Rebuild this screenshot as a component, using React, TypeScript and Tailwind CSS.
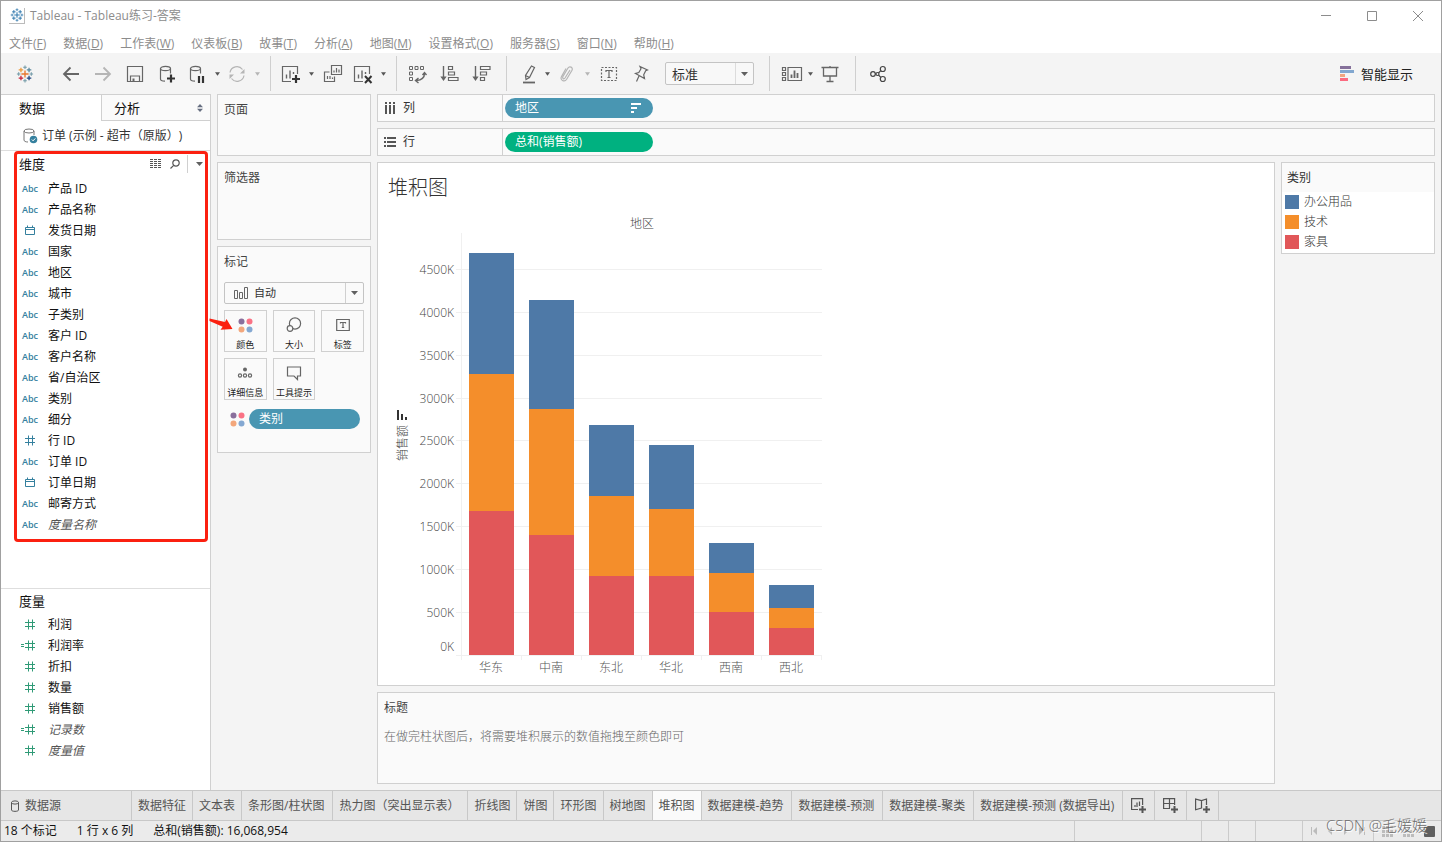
import React from "react";

const LOGO_SMALL = "M12 2.5v4M10 4.5h4M12 17.5v4M10 19.5h4M3 12h4M5 10v4M17 12h4M19 10v4";

function TableauLogo({ mono = false, className = "" }: { mono?: boolean; className?: string }) {
  const c = mono
    ? ["#2f78ad", "#2f78ad", "#2f78ad", "#2f78ad", "#2f78ad", "#2f78ad"]
    : ["#e8762c", "#eb9a3c", "#59879b", "#c72037", "#1f447e", "#7099a6"];
  return (
    <svg viewBox="2 2 20 20" className={className} fill="none" aria-hidden="true">
      <path d={LOGO_SMALL} stroke={c[5]} strokeWidth="1.1" />
      <path d="M12 8v8M8 12h8" stroke={c[0]} strokeWidth="1.5" />
      <path d="M7.5 5v5M5 7.5h5" stroke={c[1]} strokeWidth="1.4" />
      <path d="M16.5 5v5M14 7.5h5" stroke={c[2]} strokeWidth="1.4" />
      <path d="M7.5 14v5M5 16.5h5" stroke={c[3]} strokeWidth="1.4" />
      <path d="M16.5 14v5M14 16.5h5" stroke={c[4]} strokeWidth="1.4" />
    </svg>
  );
}

function Glyph({ children, className = "h-5 w-5", box = "0 0 20 20" }: { children: React.ReactNode; className?: string; box?: string }) {
  return (
    <svg viewBox={box} className={className} fill="none" stroke="currentColor" strokeWidth="1.2" aria-hidden="true">
      {children}
    </svg>
  );
}

function Caret() {
  return (
    <svg viewBox="0 0 7 4" className="h-1 w-[7px] text-[#606060]" aria-hidden="true">
      <path d="M0 0h7L3.500 4z" fill="currentColor" />
    </svg>
  );
}

function Tool({ label, size = "w-8", children }: { label: string; size?: string; children: React.ReactNode }) {
  return (
    <button type="button" aria-label={label} className={`flex h-8 shrink-0 items-center justify-center ${size}`}>
      {children}
    </button>
  );
}

function Drop({ label, muted = false, size = "w-3" }: { label: string; muted?: boolean; size?: string }) {
  return (
    <button type="button" aria-label={label} className={`flex h-8 shrink-0 items-center justify-center ${size}`}>
      <svg viewBox="0 0 6 4" className={muted ? "h-1 w-[5px] text-[#b5b5b5]" : "h-1 w-[5px] text-[#555]"} aria-hidden="true">
        <path d="M0 0h6L3 4z" fill="currentColor" />
      </svg>
    </button>
  );
}

const plus = <path d="M14 10.5v8M10 14.5h8" stroke="#333" strokeWidth="2.2" />;
const cylinder = (
  <>
    <ellipse cx="8.5" cy="4.5" rx="5" ry="2.2" />
    <path d="M3.500 4.500v10.500c0 1.300 1.800 2.200 4.500 2.200M13.500 4.500v5" />
  </>
);

const menus: [string, string][] = [
  ["文件", "F"], ["数据", "D"], ["工作表", "W"], ["仪表板", "B"], ["故事", "T"], ["分析", "A"],
  ["地图", "M"], ["设置格式", "O"], ["服务器", "S"], ["窗口", "N"], ["帮助", "H"],
];

function Toolbar() {
  const group = "flex h-[35px] items-center border-r border-[#cfcfcf]";
  return (
    <div role="toolbar" aria-label="工具栏" className="flex h-[41px] items-center bg-[#f4f4f4] text-[#666]">
      <div className={`${group} w-12 justify-center`}>
        <Tool label="开始页面"><TableauLogo className="h-[18px] w-[18px]" /></Tool>
      </div>
      <div className={`${group} pr-[7px] pl-1.5`}>
        <Tool label="撤消"><Glyph><path d="M18 10H3M9.500 3.500 3 10l6.500 6.500" strokeWidth="1.8" /></Glyph></Tool>
        <Tool label="重做"><span className="text-[#b5b5b5]"><Glyph><path d="M2 10h15M10.500 3.500 17 10l-6.500 6.500" strokeWidth="1.8" /></Glyph></span></Tool>
        <Tool label="保存"><Glyph><path d="M2.500 2.500h15v15h-15zM5.500 17.500v-5.500h9v5.500" /><path d="M7.500 14.500h2v3h-2z" fill="currentColor" stroke="none" /></Glyph></Tool>
        <Tool label="新建数据源"><Glyph>{cylinder}{plus}</Glyph></Tool>
        <Tool label="暂停自动更新" size="w-7"><Glyph>{cylinder}<path d="M12 12v7M16 12v7" stroke="#333" strokeWidth="2.200" /></Glyph></Tool>
        <Drop label="自动更新选项" />
        <Tool label="运行更新" size="w-7"><span className="text-[#b5b5b5]"><Glyph><path d="M3 8.500a7 7 0 0 1 12.500-3M17 11.500a7 7 0 0 1-12.500 3" /><path d="M17.500 5v4.500h-4.500zM2.500 15v-4.500h4.500z" fill="currentColor" stroke="none" /></Glyph></span></Tool>
        <Drop label="更新选项" muted />
      </div>
      <div className={`${group} pr-[7px] pl-1.5`}>
        <Tool label="新建工作表" size="w-7"><Glyph><path d="M10 17.500H1.500v-15h15V10" /><path d="M5.500 14.500v-4M9 14.500v-8M12.500 10V8" strokeWidth="1.400" /><path d="M15 11v8M11 15h8" stroke="#333" strokeWidth="2.200" /></Glyph></Tool>
        <Drop label="新建选项" />
        <Tool label="复制工作表"><Glyph><path d="M8.500 1.500h10v9h-10zM6.500 8h-5v9.500h10v-5" /><path d="M11 8.500v-2M13.500 8.500V4M16 8.500V5.500M4.500 15v-3M7 15v-3M9.500 15v-1.500" /></Glyph></Tool>
        <Tool label="清除工作表" size="w-7"><Glyph><path d="M10 17.500H1.500v-15h15V10" /><path d="M5.500 14.500v-4M9 14.500v-8M12.500 10V8" strokeWidth="1.400" /><path d="m12 12 6.500 7M18.500 12 12 19" stroke="#333" strokeWidth="2" /></Glyph></Tool>
        <Drop label="清除选项" />
      </div>
      <div className={`${group} pr-2 pl-[5px]`}>
        <Tool label="交换行和列"><Glyph><path d="M1.500 2.500h3v3h-3zM7 2.500h3v3h-3zM12.500 2.500h3v3h-3zM1.500 8h3v3h-3zM1.500 13.500h3v3h-3z" strokeWidth="1" /><path d="M16.500 9.500c0 4-3 6.500-8 7M14.500 11l2-2.500 2 2.500M10.500 14l-3 2.500 3 2.500" strokeWidth="1.400" /></Glyph></Tool>
        <Tool label="升序排序"><Glyph><path d="M3.500 2v13" strokeWidth="1.400" /><path d="M1.500 13h4l-2 3z" fill="currentColor" /><path d="M8.500 2.500h4v3h-4zM8.500 8h6v3h-6zM8.500 13.500h9.500v3H8.500z" /></Glyph></Tool>
        <Tool label="降序排序"><Glyph><path d="M3.500 2v13" strokeWidth="1.400" /><path d="M1.500 13h4l-2 3z" fill="currentColor" /><path d="M8.500 2.500h9.500v3H8.500zM8.500 8h6v3h-6zM8.500 13.500h4v3h-4z" /></Glyph></Tool>
      </div>
      <div className={`${group} pr-[15px] pl-2`}>
        <Tool label="突出显示" size="w-7"><Glyph><path d="m12.500 2 3 1.500-5 10-3.500 2-.500-4zM6.500 11.500l4 2" /><path d="M4 18.500h12" strokeWidth="1.800" /></Glyph></Tool>
        <Drop label="突出显示选项" size="w-2" />
        <Tool label="组成员" size="w-8"><span className="text-[#b5b5b5]"><Glyph><path d="m13 6-5 8c-1 1.500-3 .5-2.200-1.200L11 4c1.500-2.500 5.500-.5 4 2.200l-5.500 9.300c-2 3-7 .5-5-3L9 4.500" /></Glyph></span></Tool>
        <Drop label="组选项" muted size="w-2" />
        <Tool label="显示标记标签" size="w-9"><Glyph><path d="M2.500 3.500h15v13h-15z" strokeDasharray="2 1.500" /><path d="M7 8V6.500h6V8M10 6.500v7M8.500 13.500h3" /></Glyph></Tool>
        <Tool label="固定轴" size="w-7"><Glyph><path d="m9 2.500 7.500 3.500-1.800.8-2 4 .8 3.700-9-5 3.300-1 2.200-3.800zM8 12l-2.500 5.500" /></Glyph></Tool>
        <div className="relative ml-2.5 w-[89px]">
          <select aria-label="适合" className="h-[23px] w-full appearance-none rounded-xs border border-[#c4c4c4] bg-[#f8f8f8] pl-1.5 text-[13px] leading-5 text-[#333]">
            <option>标准</option>
          </select>
          <span className="pointer-events-none absolute top-px right-px flex h-[21px] w-[18px] items-center justify-center border-l border-[#dcdcdc]"><Caret /></span>
        </div>
      </div>
      <div className={`${group} pr-[9px] pl-2`}>
        <Tool label="显示/隐藏卡" size="w-7"><Glyph box="0 0 22 20" className="h-5 w-[22px]"><path d="M1.500 3.500h3v3h-3zM1.500 8.500h3v3h-3zM1.500 13.500h3v3h-3zM7 3.500h13.500v13H7z" /><path d="M10.500 14v-3.500M13.500 14V6.500M16.500 14V9" strokeWidth="1.800" /></Glyph></Tool>
        <Drop label="卡选项" size="w-2" />
        <Tool label="演示模式"><Glyph><path d="M1.500 3.500h17M3.500 3.500v8.500h13V3.500M10 2v1.500M10 12v5.500M6.500 17.500h7" strokeWidth="1.300" /></Glyph></Tool>
      </div>
      <div className="pl-1.5">
        <Tool label="共享"><span className="text-[#444]"><Glyph><circle cx="5" cy="10" r="2.300" /><circle cx="14.800" cy="5" r="2.500" /><circle cx="14.800" cy="15" r="2.500" /><circle cx="9.500" cy="10" r="1.500" /><path d="M7.200 10H8M10.500 9l2.300-2.300M10.500 11l2.300 2.300" /></Glyph></span></Tool>
      </div>
      <button type="button" className="mr-7 ml-auto flex items-center gap-1.5 text-[13px] text-[#222]">
        <svg viewBox="0 0 15 15" className="h-[15px] w-[15px]" aria-hidden="true">
          <path d="M0 0h11v3H0z" fill="#85709a" /><path d="M0 4h14v3H0z" fill="#82a7cf" /><path d="M0 8h5v3H0z" fill="#f0a580" /><path d="M0 12h8v3H0z" fill="#fb6b80" />
        </svg>
        智能显示
      </button>
    </div>
  );
}

type Field = { name: string; kind: "abc" | "date" | "num" | "calc"; italic?: boolean };
const dimensions: Field[] = [
  { name: "产品 ID", kind: "abc" }, { name: "产品名称", kind: "abc" }, { name: "发货日期", kind: "date" },
  { name: "国家", kind: "abc" }, { name: "地区", kind: "abc" }, { name: "城市", kind: "abc" },
  { name: "子类别", kind: "abc" }, { name: "客户 ID", kind: "abc" }, { name: "客户名称", kind: "abc" },
  { name: "省/自治区", kind: "abc" }, { name: "类别", kind: "abc" }, { name: "细分", kind: "abc" },
  { name: "行 ID", kind: "num" }, { name: "订单 ID", kind: "abc" }, { name: "订单日期", kind: "date" },
  { name: "邮寄方式", kind: "abc" }, { name: "度量名称", kind: "abc", italic: true },
];
const measures: Field[] = [
  { name: "利润", kind: "num" }, { name: "利润率", kind: "calc" }, { name: "折扣", kind: "num" }, { name: "数量", kind: "num" },
  { name: "销售额", kind: "num" }, { name: "记录数", kind: "calc", italic: true }, { name: "度量值", kind: "num", italic: true },
];

function FieldIcon({ kind }: { kind: Field["kind"] }) {
  if (kind === "abc") return <span className="w-[18px] text-center text-[9px] font-semibold">Abc</span>;
  return (
    <svg viewBox="0 1 18 12" className="h-3 w-[18px]" fill="none" stroke="currentColor" aria-hidden="true">
      {kind === "date" ? (
        <path d="M4.500 3.500h9v7h-9zM4.500 5.500h9M6.500 1.500v2M11.500 1.500v2" />
      ) : (
        <path d="M7.500 1.500v10M11.500 1.500v10M4 4.500h10M4 8.500h10" />
      )}
      {kind === "calc" && <path d="M0 5.500h3M0 7.500h3" />}
    </svg>
  );
}

function FieldList({ fields, tone }: { fields: Field[]; tone: string }) {
  return (
    <ul className={tone}>
      {fields.map((f) => (
        <li key={f.name}>
          <button type="button" className="flex h-[21px] w-full items-center gap-[9px] pl-5 text-left">
            <FieldIcon kind={f.kind} />
            <span className={f.italic ? "text-[#555] italic" : "text-[#111]"}>{f.name}</span>
          </button>
        </li>
      ))}
    </ul>
  );
}

function DataPane() {
  return (
    <aside className="flex w-[210px] shrink-0 flex-col border-r border-[#d0d0d0] bg-white">
      <div role="tablist" className="flex h-[27px] text-[13px] text-[#111]">
        <button type="button" role="tab" aria-selected="true" className="w-[100px] border-t border-[#d0d0d0] pl-[18px] text-left">数据</button>
        <button type="button" role="tab" aria-selected="false" className="flex flex-1 items-center justify-between border border-r-0 border-[#d0d0d0] bg-[#fafafa] pr-[7px] pl-3 text-left">
          分析
          <svg viewBox="0 0 6 8" className="h-2 w-1.5" aria-hidden="true"><path d="M0 3.300 3 0l3 3.300zM0 4.700h6L3 8z" fill="#666e80" /></svg>
        </button>
      </div>
      <button type="button" className="flex h-[30px] items-center gap-1 border-b border-[#dedede] pl-[21px] whitespace-nowrap text-[#333] [text-spacing-trim:space-all]">
        <svg viewBox="0 0 16 16" className="h-4 w-4" fill="none" stroke="#777" aria-hidden="true">
          <ellipse cx="7" cy="3" rx="5" ry="2" /><path d="M2 3v9c0 1.200 1.500 2 4 2M12 3v4" />
          <circle cx="11.500" cy="11.500" r="3.800" fill="#35809e" stroke="none" /><path d="m9.800 11.500 1.300 1.300 2.200-2.400" stroke="#fff" />
        </svg>
        订单 (示例 - 超市（原版）)
      </button>
      <section aria-label="维度" className="relative flex-1">
        <div className="flex h-[27px] items-center pr-[7px] pb-0.5 pl-[18px]">
          <h2 className="flex-1 text-[13px] text-[#111]">维度</h2>
          <button type="button" aria-label="查看数据" className="mr-2">
            <svg viewBox="0 0 12 9" className="h-[9px] w-3" stroke="#555" strokeDasharray="3 1" aria-hidden="true"><path d="M0 .5h12M0 2.500h12M0 4.500h12M0 6.500h12M0 8.500h12" /></svg>
          </button>
          <button type="button" aria-label="查找字段" className="mr-[7px]">
            <svg viewBox="0 0 10 10" className="h-2.5 w-2.5" fill="none" stroke="#555" strokeWidth="1.200" aria-hidden="true"><circle cx="6" cy="4" r="3.200" /><path d="M3.700 6.300.5 9.500" /></svg>
          </button>
          <button type="button" aria-label="维度菜单" className="flex h-[18px] items-center border-l border-[#d0d0d0] pl-2"><Caret /></button>
        </div>
        <FieldList fields={dimensions} tone="text-[#35809e]" />
        <div className="pointer-events-none absolute top-0 right-0.5 left-[13px] h-[391px] rounded-[4px] border-3 border-[#fb2010]" />
        <svg viewBox="0 0 24 14" className="pointer-events-none absolute top-[166px] left-[208px] z-10 h-3.5 w-6" aria-hidden="true">
          <path d="M.5 1.500 16 5l1.500-3L23.500 12l-12 .8 2.200-3L.5 4z" fill="#fb2010" />
        </svg>
      </section>
      <section aria-label="度量" className="min-h-[202px] border-t border-[#dedede]">
        <h2 className="flex h-[25px] items-center pb-0.5 pl-[18px] text-[13px] text-[#111]">度量</h2>
        <FieldList fields={measures} tone="text-[#2f9a76]" />
      </section>
    </aside>
  );
}

function ColorDots() {
  return (
    <svg viewBox="0 0 15 15" className="h-[15px] w-[15px]" aria-hidden="true">
      <circle cx="3.500" cy="3.500" r="3" fill="#8a6f9c" /><circle cx="11.500" cy="3.500" r="3" fill="#fa7285" />
      <circle cx="3.500" cy="11.500" r="3" fill="#f3a77c" /><circle cx="11.500" cy="11.500" r="3" fill="#84a8d2" />
    </svg>
  );
}

const markButtons: { name: string; icon: React.ReactNode }[] = [
  { name: "颜色", icon: <ColorDots /> },
  { name: "大小", icon: <Glyph className="h-4 w-4" box="0 0 16 16"><circle cx="9" cy="6.500" r="5.600" /><circle cx="4" cy="11.500" r="2.800" fill="#fafafa" /></Glyph> },
  { name: "标签", icon: <Glyph className="h-3.5 w-3.5" box="0 0 14 14"><path d="M.7 1.500h12.600v11H.7zM4.500 5.500v-1h5v1M7 4.500v5M5.800 9.500h2.400" /></Glyph> },
  { name: "详细信息", icon: <Glyph className="h-4 w-4" box="0 0 16 16"><circle cx="8" cy="4.500" r="2" fill="currentColor" stroke="none" /><circle cx="3" cy="10.500" r="1.600" /><circle cx="8" cy="10.500" r="1.600" /><circle cx="13" cy="10.500" r="1.600" /></Glyph> },
  { name: "工具提示", icon: <Glyph className="h-4 w-4" box="0 0 16 16"><path d="M1.500 2h13v9h-3v3.500L8 11H1.500z" /></Glyph> },
];

function CardTitle({ children }: { children: React.ReactNode }) {
  return <h2 className="flex h-[30px] items-center px-1.5 text-[#444]">{children}</h2>;
}

function Cards() {
  const card = "border border-[#d0d0d0] bg-[#fafafa]";
  return (
    <div className="flex w-[154px] shrink-0 flex-col gap-1.5">
      <section className={`${card} h-[62px]`}><CardTitle>页面</CardTitle></section>
      <section className={`${card} h-[78px]`}><CardTitle>筛选器</CardTitle></section>
      <section className={`${card} pb-[23px]`}>
        <CardTitle>标记</CardTitle>
        <div className="flex flex-col gap-1.5 px-1.5 pt-[5px]">
          <div className="relative">
            <select aria-label="标记类型" className="h-[22px] w-full appearance-none rounded-xs border border-[#c4c4c4] bg-[#fafafa] pl-[29px] text-[11px] leading-5 text-[#333]">
              <option>自动</option>
            </select>
            <svg viewBox="0 0 14 12" className="pointer-events-none absolute top-[5px] left-2.5 h-3 w-3.5" fill="none" stroke="#666" aria-hidden="true">
              <path d="M.5 3.500h3v8h-3zM5.500 5.500h3v6h-3zM10.500.5h3v11h-3z" />
            </svg>
            <span className="pointer-events-none absolute top-px right-px flex h-5 w-[18px] items-center justify-center border-l border-[#d0d0d0]"><Caret /></span>
          </div>
          <div className="grid grid-cols-3 gap-1.5">
            {markButtons.map((b) => (
              <button key={b.name} type="button" className="flex h-[42px] min-w-0 flex-col items-center justify-end gap-[5px] border border-[#d0d0d0] text-[9px] leading-[13px] whitespace-nowrap text-[#222]">
                <span className="flex h-4 items-center text-[#666]">{b.icon}</span>
                {b.name}
              </button>
            ))}
          </div>
          <div className="flex items-center gap-1 pt-[3px] pr-1 pl-1.5">
            <ColorDots />
            <button type="button" className="h-5 flex-1 rounded-full bg-[#4996b2] pl-2.5 text-left text-white">类别</button>
          </div>
        </div>
      </section>
    </div>
  );
}

function Shelf({ name, icon, children }: { name: string; icon: React.ReactNode; children: React.ReactNode }) {
  return (
    <div className="flex h-7 border border-[#d0d0d0] bg-[#fafafa]">
      <div className="flex w-[125px] items-center gap-1.5 border-r border-[#d0d0d0] pl-1.5 text-[#333]">
        {icon}
        {name}
      </div>
      <div className="flex items-center pl-0.5">{children}</div>
    </div>
  );
}

const regions = [
  { name: "华东", values: [1680, 1597, 1410] },
  { name: "中南", values: [1400, 1469, 1270] },
  { name: "东北", values: [920, 932, 828] },
  { name: "华北", values: [920, 781, 746] },
  { name: "西南", values: [501, 455, 350] },
  { name: "西北", values: [315, 233, 268] },
];
const barColors = ["#e15759", "#f48e2b", "#4e79a7"];
const ticks = [0, 500, 1000, 1500, 2000, 2500, 3000, 3500, 4000, 4500];
const BASE = 444;
const AXIS = 83;
const toY = (v: number) => BASE - Math.round(v * 0.0858);

function StackedChart() {
  return (
    <svg viewBox="0 0 450 472" width="450" height="472" role="img" aria-label="堆积图" className="block text-[12px]">
      <text x="264" y="17" textAnchor="middle" fill="#444" className="font-light">地区</text>
      <g fill="#f0f0f0" shapeRendering="crispEdges">
        {ticks.map((t) => <rect key={t} x={AXIS - 5} y={toY(t)} width="366" height="1" />)}
        <rect x={AXIS} y="22" width="1" height="427" />
        {regions.map((r, i) => <rect key={r.name} x={AXIS + 60 * (i + 1)} y={BASE} width="1" height="5" />)}
      </g>
      {ticks.map((t) => (
        <text key={t} x="76" y={t === 0 ? BASE - 4 : toY(t) + 5} textAnchor="end" fill="#444" className="font-light">{t}K</text>
      ))}
      {regions.map((r, i) => {
        let sum = 0;
        return (
          <g key={r.name} shapeRendering="crispEdges">
            {r.values.map((v, k) => {
              const bottom = toY(sum);
              sum += v;
              return <rect key={k} x={AXIS + 8 + 60 * i} y={toY(sum)} width="45" height={bottom - toY(sum)} fill={barColors[k]} />;
            })}
            <text x={AXIS + 30 + 60 * i} y="461" textAnchor="middle" fill="#555" className="font-light">{r.name}</text>
          </g>
        );
      })}
      <path d="M19 199h2v10h-2zM23 203h2v6h-2zM27 206h2v3h-2z" fill="#333" />
      <text transform="translate(29 232) rotate(-90)" textAnchor="middle" fill="#444" className="font-light">销售额</text>
    </svg>
  );
}

const legend = [
  { name: "办公用品", color: "bg-[#4e79a7]" },
  { name: "技术", color: "bg-[#f48e2b]" },
  { name: "家具", color: "bg-[#e15759]" },
];

const sheets = ["数据特征", "文本表", "条形图/柱状图", "热力图（突出显示表）", "折线图", "饼图", "环形图", "树地图", "堆积图", "数据建模-趋势", "数据建模-预测", "数据建模-聚类", "数据建模-预测 (数据导出)"];

function SheetTabs() {
  const tab = "flex shrink-0 items-center border-r border-[#c8c8c8]";
  const add = <path d="M11.500 8v7M8 11.500h7" strokeWidth="2" />;
  return (
    <nav aria-label="工作表" className="flex h-[31px] border-y border-[#c8c8c8] bg-[#e6e6e6] text-[#555]">
      <button type="button" className={`${tab} w-[131px] gap-1 pl-2`}>
        <Glyph className="h-3 w-3" box="0 0 12 12"><ellipse cx="6" cy="2.500" rx="3.500" ry="1.600" strokeWidth="1" /><path d="M2.500 2.500v7.500c0 1.800 7 1.800 7 0V2.500" strokeWidth="1" /></Glyph>
        数据源
      </button>
      {sheets.map((s) => (
        <button key={s} type="button" className={`${tab} ${s === "堆积图" ? "bg-[#fafafa]" : ""} ${s.length > 5 ? "pr-2 pl-1.5" : "px-1.5"}`}>{s}</button>
      ))}
      <button type="button" aria-label="新建工作表" className={`${tab} w-8 justify-center`}>
        <Glyph className="h-4 w-4" box="0 0 16 16"><path d="M7 11.500H.6V.6h11V7" /><path d="M4 9V7M6 9V4.500M8.500 8V3.500" />{add}</Glyph>
      </button>
      <button type="button" aria-label="新建仪表板" className={`${tab} w-8 justify-center`}>
        <Glyph className="h-4 w-4" box="0 0 16 16"><path d="M7 10.500H.6V.6h11V7M6.500.6v10M.6 5.500h11" />{add}</Glyph>
      </button>
      <button type="button" aria-label="新建故事" className={`${tab} w-8 justify-center`}>
        <Glyph className="h-4 w-4" box="0 0 16 16"><path d="M7 9.500 6.500 10 .6 11.800V1l3 .8 2.900.8L11.500 1v6M6.500 2.600V10" />{add}</Glyph>
      </button>
    </nav>
  );
}

function StatusBar() {
  const cell = "border-l border-[#cbcbcb]";
  return (
    <footer className="relative flex h-5 items-center bg-[#ebebeb] pl-[3px] text-[#111]">
      <span className="mr-5">18 个标记</span>
      <span className="mr-5">1 行 x 6 列</span>
      <span>总和(销售额): 16,068,954</span>
      <div className="ml-auto flex h-full text-[#bcbcbc]">
        <div className={`${cell} w-[127px]`} />
        <div className={`${cell} w-[27px]`} />
        <div className={`${cell} w-[27px]`} />
        <div className={`${cell} w-[47px]`} />
        <div className={`${cell} flex w-[71px] items-center justify-between px-2`}>
          <svg viewBox="0 0 6 8" className="h-2 w-1.5" fill="currentColor" aria-hidden="true"><path d="M0 0h1v8H0zM6 0v8L2 4z" /></svg>
          <svg viewBox="0 0 4 8" className="h-2 w-1" fill="currentColor" aria-hidden="true"><path d="M4 0v8L0 4z" /></svg>
          <svg viewBox="0 0 4 8" className="h-2 w-1" fill="currentColor" aria-hidden="true"><path d="M0 0v8l4-4z" /></svg>
          <svg viewBox="0 0 6 8" className="h-2 w-1.5" fill="currentColor" aria-hidden="true"><path d="M5 0h1v8H5zM0 0v8l4-4z" /></svg>
        </div>
        <div className={`${cell} flex w-[68px] items-center justify-between pr-1.5 pl-2`}>
          <svg viewBox="0 0 11 11" className="h-[11px] w-[11px]" fill="currentColor" aria-hidden="true"><path d="M0 0h3v3H0zM4 0h3v3H4zM8 0h3v3H8zM0 4h3v3H0zM4 4h3v3H4zM8 4h3v3H8zM0 8h3v3H0zM4 8h3v3H4zM8 8h3v3H8z" /></svg>
          <svg viewBox="0 0 11 11" className="h-[11px] w-[11px]" fill="currentColor" aria-hidden="true"><path d="M4 0h3v3H4zM2 4h3v3H2zM6 4h3v3H6zM0 8h3v3H0zM4 8h3v3H4zM8 8h3v3H8z" /></svg>
          <span className="h-[11px] w-[11px] rounded-[1px] bg-[#606060]" />
        </div>
      </div>
      <span className="pointer-events-none absolute -top-1.5 right-3.5 text-[15px] leading-5 font-light text-[#6b6b6b] [text-shadow:1px_1px_0_#ffffff]">CSDN @毛媛媛</span>
    </footer>
  );
}

export default function App() {
  return (
    <div className="flex min-h-screen flex-col border border-[#a0a0a0] bg-[#f4f4f4] font-['Open_Sans','Noto_Sans_CJK_SC',sans-serif] text-[12px] leading-4">
      <header className="bg-white text-[#8c8c8c]">
        <div className="flex h-[29px] items-center pl-2">
          <span className="flex h-4 w-4 items-center justify-center border-r border-b border-[#bbb]"><TableauLogo mono className="h-3.5 w-3.5" /></span>
          <h1 className="ml-[5px] flex-1">Tableau - Tableau练习-答案</h1>
          <button type="button" aria-label="最小化" className="flex w-[46px] justify-center"><Glyph className="h-3 w-3" box="0 0 12 12"><path d="M1 5.500h10" strokeWidth="1" /></Glyph></button>
          <button type="button" aria-label="最大化" className="flex w-[46px] justify-center"><Glyph className="h-3 w-3" box="0 0 12 12"><path d="M1.500 1.500h9v9h-9z" strokeWidth="1" /></Glyph></button>
          <button type="button" aria-label="关闭" className="flex w-[46px] justify-center"><Glyph className="h-3 w-3" box="0 0 12 12"><path d="m1 1 10 10M11 1 1 11" strokeWidth="1" /></Glyph></button>
        </div>
        <nav aria-label="菜单" className="flex h-[23px] items-center gap-[17px] pt-1 pl-2">
          {menus.map(([name, key]) => (
            <button key={name} type="button" className="whitespace-nowrap">{name}(<u>{key}</u>)</button>
          ))}
        </nav>
      </header>
      <Toolbar />
      <div className="flex flex-1">
        <DataPane />
        <main className="flex min-w-0 flex-1 gap-1.5 pr-1.5 pb-1.5 pl-1.5">
          <Cards />
          <div className="flex min-w-0 flex-1 flex-col gap-1.5">
            <Shelf name="列" icon={<svg viewBox="0 0 13 12" className="h-3 w-[13px]" fill="#555" aria-hidden="true"><path d="M1 0h2v2H1zM5 0h2v2H5zM9 0h2v2H9zM1 3h2v9H1zM5 3h2v9H5zM9 3h2v9H9z" /></svg>}>
              <button type="button" className="flex h-5 w-[148px] items-center justify-between rounded-full bg-[#4996b2] pr-3 pl-2.5 text-white">
                地区
                <svg viewBox="0 0 10 10" className="h-2.5 w-2.5" fill="#fff" aria-hidden="true"><path d="M0 0h10v2H0zM0 4h6v2H0zM0 8h3v2H0z" /></svg>
              </button>
            </Shelf>
            <Shelf name="行" icon={<svg viewBox="0 0 13 10" className="h-2.5 w-[13px]" fill="#555" aria-hidden="true"><path d="M0 0h2v2H0zM0 4h2v2H0zM0 8h2v2H0zM3 0h9v2H3zM3 4h9v2H3zM3 8h9v2H3z" /></svg>}>
              <button type="button" className="flex h-5 w-[148px] items-center rounded-full bg-[#00b180] px-2.5 text-white">总和(销售额)</button>
            </Shelf>
            <div className="flex flex-1 gap-1.5">
              <div className="flex min-w-0 flex-1 flex-col gap-1.5">
                <section className="flex-1 border border-[#d0d0d0] bg-white">
                  <h2 className="flex h-12 items-center pt-0.5 pl-2.5 text-[20px] leading-7 font-light text-[#333]">堆积图</h2>
                  <StackedChart />
                </section>
                <section className="h-[92px] border border-[#d0d0d0] bg-[#fafafa]">
                  <CardTitle>标题</CardTitle>
                  <p className="px-1.5 pt-1.5 font-light text-[#666]">在做完柱状图后，将需要堆积展示的数值拖拽至颜色即可</p>
                </section>
              </div>
              <section className="w-[154px] shrink-0 self-start border border-[#d0d0d0] bg-white">
                <div className="bg-[#fafafa] text-[#333]"><h2 className="flex h-[29px] items-center px-[5px]">类别</h2></div>
                <ul className="pb-px">
                  {legend.map((l) => (
                    <li key={l.name} className="flex h-5 items-center gap-[5px] pl-[3px] font-light text-[#333]">
                      <span className={`h-3.5 w-3.5 ${l.color}`} />
                      {l.name}
                    </li>
                  ))}
                </ul>
              </section>
            </div>
          </div>
        </main>
      </div>
      <SheetTabs />
      <StatusBar />
    </div>
  );
}
